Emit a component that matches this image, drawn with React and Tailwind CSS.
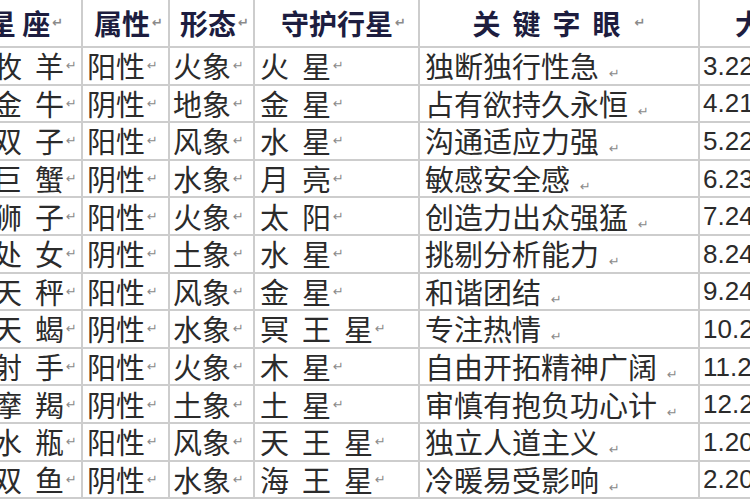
const rows = [
  ["牧 羊", "阳性", "火象", "火 星", "独断独行性急", "3.22"],
  ["金 牛", "阴性", "地象", "金 星", "占有欲持久永恒", "4.21"],
  ["双 子", "阳性", "风象", "水 星", "沟通适应力强", "5.22"],
  ["巨 蟹", "阴性", "水象", "月 亮", "敏感安全感", "6.23"],
  ["狮 子", "阳性", "火象", "太 阳", "创造力出众强猛", "7.24"],
  ["处 女", "阴性", "土象", "水 星", "挑剔分析能力", "8.24"],
  ["天 秤", "阳性", "风象", "金 星", "和谐团结", "9.24"],
  ["天 蝎", "阴性", "水象", "冥 王 星", "专注热情", "10.24"],
  ["射 手", "阳性", "火象", "木 星", "自由开拓精神广阔", "11.23"],
  ["摩 羯", "阴性", "土象", "土 星", "审慎有抱负功心计", "12.22"],
  ["水 瓶", "阳性", "风象", "天 王 星", "独立人道主义", "1.20"],
  ["双 鱼", "阴性", "水象", "海 王 星", "冷暖易受影响", "2.20"],
];

// word paragraph mark
function Mark() {
  return <span className="text-[13px] text-[#8a8a8a] ml-[2px] font-['DejaVu_Sans',sans-serif]">↵</span>;
}

const widths = ["w-[93px]", "w-[87px]", "w-[85px]", "w-[165px]", "w-[280px]", "w-[150px]"];

function App() {
  return (
    <div className="w-[750px] h-[500px] overflow-hidden bg-white font-['Noto_Sans_CJK_SC',sans-serif]">
      <div className="ml-[-10px] w-[860px]">
        {/* header */}
        <div className="flex h-[48px] border-b-2 border-[#cdcdcd] text-[28px] font-bold text-[#1d1d3f]">
          <div className={`${widths[0]} shrink-0 border-r-2 border-[#cdcdcd] flex items-center pl-[0px]`}>
            <span className="ml-[-2px]">星 座</span>
            <Mark />
          </div>
          <div className={`${widths[1]} shrink-0 border-r-2 border-[#cdcdcd] flex items-center justify-center pl-[6px]`}>
            属性<Mark />
          </div>
          <div className={`${widths[2]} shrink-0 border-r-2 border-[#cdcdcd] flex items-center justify-center pl-[6px]`}>
            形态<Mark />
          </div>
          <div className={`${widths[3]} shrink-0 border-r-2 border-[#cdcdcd] flex items-center justify-center pl-[14px]`}>
            守护行星<Mark />
          </div>
          <div className={`${widths[4]} shrink-0 border-r-2 border-[#cdcdcd] flex items-center justify-center`}>
            <span className="tracking-[12px]">关键字眼</span>
            <Mark />
          </div>
          <div className={`${widths[5]} shrink-0 flex items-center pl-[35px]`}>
            大致日期
          </div>
        </div>
        {rows.map((r) => (
          <div key={r[0]} className="flex h-[37.6px] border-b-2 border-[#cdcdcd] text-[29px] text-[#2b2b2b] leading-none">
            <div className={`${widths[0]} shrink-0 border-r-2 border-[#cdcdcd] flex items-center pl-[3px]`}>
              <span className="whitespace-pre">{r[0].replace(" ", "  ")}</span>
              <Mark />
            </div>
            <div className={`${widths[1]} shrink-0 border-r-2 border-[#cdcdcd] flex items-center pl-[4px]`}>
              {r[1]}<Mark />
            </div>
            <div className={`${widths[2]} shrink-0 border-r-2 border-[#cdcdcd] flex items-center pl-[3px]`}>
              {r[2]}<Mark />
            </div>
            <div className={`${widths[3]} shrink-0 border-r-2 border-[#cdcdcd] flex items-center pl-[5px]`}>
              <span className="whitespace-pre">{r[3].split(" ").join("  ")}</span>
              <Mark />
            </div>
            <div className={`${widths[4]} shrink-0 border-r-2 border-[#cdcdcd] flex items-center pl-[5px]`}>
              <span>{r[4]}</span>
              <span className="ml-[8px]"><Mark /></span>
            </div>
            <div className={`${widths[5]} shrink-0 flex items-center pl-[3px] text-[26px] font-['Liberation_Sans',sans-serif]`}>
              {r[5]}
            </div>
          </div>
        ))}
      </div>
    </div>
  );
}

export default App;
